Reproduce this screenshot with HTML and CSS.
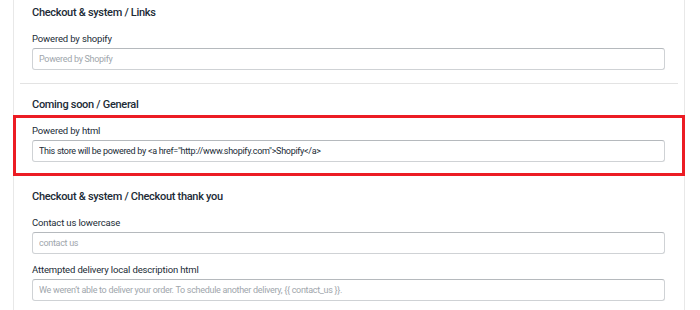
FILE: index.html
```html
<!DOCTYPE html>
<html lang="en">
<head>
  <meta charset="UTF-8" />
  <title>Translations</title>
  <link rel="stylesheet" href="styles.css">
</head>
<body>
  <div class="card">
    <section class="group">
      <h2 class="group-title">Checkout &amp; system / Links</h2>
      <div class="field">
        <label class="field-label">Powered by shopify</label>
        <input class="field-input" type="text" placeholder="Powered by Shopify">
      </div>
    </section>

    <section class="group">
      <h2 class="group-title">Coming soon / General</h2>
      <div class="field highlighted">
        <label class="field-label">Powered by html</label>
        <input class="field-input" type="text" value='This store will be powered by &lt;a href="http://www.shopify.com"&gt;Shopify&lt;/a&gt;'>
      </div>
    </section>

    <section class="group">
      <h2 class="group-title">Checkout &amp; system / Checkout thank you</h2>
      <div class="field">
        <label class="field-label">Contact us lowercase</label>
        <input class="field-input" type="text" placeholder="contact us">
      </div>
      <div class="field">
        <label class="field-label">Attempted delivery local description html</label>
        <input class="field-input" type="text" placeholder="We weren’t able to deliver your order. To schedule another delivery, {{ contact_us }}.">
      </div>
    </section>
  </div>
</body>
</html>
```

FILE: styles.css
```css
* {
  box-sizing: border-box;
}
body {
  margin: 0;
  background: #fff;
  font-family: Roboto, "Open Sans", sans-serif;
  color: #212b36;
}
.card {
  margin: -8px 0 0 13px;
  width: 672px;
  padding: 0 6px;
  border-left: 1px solid #e8e8e8;
  border-right: 1px solid #e8e8e8;
}
.group {
  padding: 13px 13px 13px 12px;
  border-bottom: 1px solid #e3e3e3;
}
.group-title {
  margin: 0 0 11px;
  font-size: 11px;
  line-height: 16px;
  font-weight: 500;
  letter-spacing: -0.3px;
}
.field {
  position: relative;
  display: flex;
  flex-direction: column;
  gap: 2px;
}
.field + .field {
  margin-top: 9px;
}
.field-label {
  font-size: 9.5px;
  line-height: 14px;
  letter-spacing: -0.15px;
}
.field-input {
  height: 22px;
  padding: 0 6px;
  font-family: inherit;
  font-size: 9px;
  letter-spacing: -0.3px;
  color: #212b36;
  background: #fff;
  border: 1px solid #cfd2d5;
  border-top-color: #b5b9bd;
  border-radius: 3px;
}
.field-input::placeholder {
  color: #a0a6ac;
}
.highlighted::after {
  content: "";
  position: absolute;
  top: -9px;
  bottom: -14px;
  left: -19px;
  right: -20px;
  border: 3px solid #ec1c24;
  pointer-events: none;
}
```
